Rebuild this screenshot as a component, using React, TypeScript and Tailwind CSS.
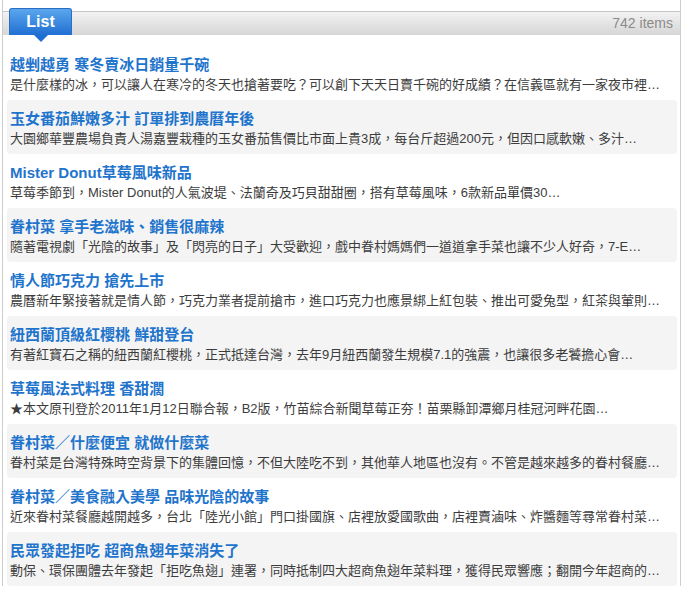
type Item = { title: string; desc: string };

const items: Item[] = [
  {
    title: "越剉越勇 寒冬賣冰日銷量千碗",
    desc: "是什麼樣的冰，可以讓人在寒冷的冬天也搶著要吃？可以創下天天日賣千碗的好成績？在信義區就有一家夜市裡…",
  },
  {
    title: "玉女番茄鮮嫩多汁 訂單排到農曆年後",
    desc: "大園鄉華豐農場負責人湯嘉豐栽種的玉女番茄售價比市面上貴3成，每台斤超過200元，但因口感軟嫩、多汁…",
  },
  {
    title: "Mister Donut草莓風味新品",
    desc: "草莓季節到，Mister Donut的人氣波堤、法蘭奇及巧貝甜甜圈，搭有草莓風味，6款新品單價30…",
  },
  {
    title: "眷村菜 拿手老滋味、銷售很麻辣",
    desc: "隨著電視劇「光陰的故事」及「閃亮的日子」大受歡迎，戲中眷村媽媽們一道道拿手菜也讓不少人好奇，7-E…",
  },
  {
    title: "情人節巧克力 搶先上市",
    desc: "農曆新年緊接著就是情人節，巧克力業者提前搶市，進口巧克力也應景綁上紅包裝、推出可愛兔型，紅茶與葷則…",
  },
  {
    title: "紐西蘭頂級紅櫻桃 鮮甜登台",
    desc: "有著紅寶石之稱的紐西蘭紅櫻桃，正式抵達台灣，去年9月紐西蘭發生規模7.1的強震，也讓很多老饕擔心會…",
  },
  {
    title: "草莓風法式料理 香甜濶",
    desc: "★本文原刊登於2011年1月12日聯合報，B2版，竹苗綜合新聞草莓正夯！苗栗縣卸潭鄉月桂冠河畔花園…",
  },
  {
    title: "眷村菜／什麼便宜 就做什麼菜",
    desc: "眷村菜是台灣特殊時空背景下的集體回憶，不但大陸吃不到，其他華人地區也沒有。不管是越來越多的眷村餐廳…",
  },
  {
    title: "眷村菜／美食融入美學 品味光陰的故事",
    desc: "近來眷村菜餐廳越開越多，台北「陸光小館」門口掛國旗、店裡放愛國歌曲，店裡賣滷味、炸醬麵等尋常眷村菜…",
  },
  {
    title: "民眾發起拒吃 超商魚翅年菜消失了",
    desc: "動保、環保團體去年發起「拒吃魚翅」連署，同時抵制四大超商魚翅年菜料理，獲得民眾響應；翻開今年超商的…",
  },
];

export default function App() {
  return (
    <div
      className="h-[589px] w-[683px] overflow-hidden bg-white"
      style={{ fontFamily: '"Liberation Sans", "Noto Sans CJK TC", sans-serif' }}
    >
      <div className="ml-[2px] w-[679px] border-x border-[#cdcdcd] pt-[11px]">
        {/* Header bar */}
        <div className="flex h-[24px] items-stretch justify-between border-t border-[#c6c6c6] bg-gradient-to-b from-[#f2f2f2] to-[#d6d6d6]">
          <div className="relative -mt-[4px] ml-[6px] flex w-[63px] items-center justify-center rounded-t-[3px] border border-b-0 border-[#2a6fc4] bg-gradient-to-b from-[#5aa6ee] to-[#1f6fd2] text-[16px] font-bold text-white">
            List
            <span className="absolute -bottom-[7px] left-1/2 h-0 w-0 -translate-x-1/2 border-x-[7px] border-t-[7px] border-x-transparent border-t-[#1f6fd2]" />
          </div>
          <div className="flex items-center pr-[7px] text-[14px] text-[#8a8a8a]">742 items</div>
        </div>

        {/* Items */}
        <div className="pl-[4px] pr-[3px] pt-[11px]">
          {items.map((it, i) => (
            <div
              key={i}
              className={`h-[54px] rounded-[4px] pl-[3px] pt-[9px] ${i % 2 === 1 ? "bg-[#f4f4f4]" : ""}`}
            >
              <div className="h-[20px] text-[15px] font-bold leading-[20px] text-[#1f74cc]">{it.title}</div>
              <div className="h-[20px] whitespace-nowrap text-[13px] leading-[20px] text-[#3c3c3c]">{it.desc}</div>
            </div>
          ))}
        </div>
      </div>
    </div>
  );
}
